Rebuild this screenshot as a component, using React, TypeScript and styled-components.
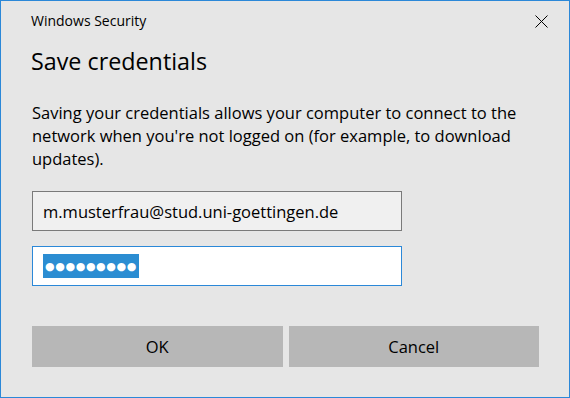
import React from 'react';
import styled, { createGlobalStyle } from 'styled-components';

const Global = createGlobalStyle`
  html, body {
    margin: 0;
    padding: 0;
    background: #e6e6e6;
  }
  * { box-sizing: border-box; }
`;

const Dialog = styled.div`
  width: 570px;
  height: 398px;
  border: 1px solid #2b88d8;
  background: #e6e6e6;
  font-family: 'Open Sans', 'Noto Sans', sans-serif;
  color: #000;
  display: flex;
  flex-direction: column;
  padding: 0 30px 0 30px;
`;

const TitleBar = styled.div`
  height: 40px;
  display: flex;
  align-items: center;
  justify-content: space-between;
  font-size: 14px;
  padding-bottom: 2px;
`;

const CloseButton = styled.div`
  width: 13px;
  height: 13px;
  margin-right: -9px;
  margin-top: 3px;
  display: flex;
  align-items: center;
  justify-content: center;
`;

const Heading = styled.h1`
  margin: 0;
  padding-top: 5px;
  font-size: 23.3px;
  font-weight: 400;
  line-height: 30px;
  height: 55px;
`;

const Message = styled.p`
  margin: 0 0 0 1px;
  padding-top: 5px;
  font-size: 16.5px;
  line-height: 23px;
  height: 95px;
`;

const Field = styled.div<{ $active?: boolean }>`
  width: 370px;
  height: 40px;
  margin-left: 1px;
  display: flex;
  align-items: center;
  padding: 0 10px;
  font-size: 16.5px;
  background: ${p => (p.$active ? '#ffffff' : '#f0f0f0')};
  border: 1px solid ${p => (p.$active ? '#2b88d8' : '#7a7a7a')};
  margin-bottom: 15px;
`;

const Selection = styled.span`
  background: #2b8dd2;
  color: #fff;
  height: 24px;
  width: 96px;
  display: flex;
  align-items: center;
  justify-content: center;
  font-family: 'DejaVu Sans', sans-serif;
  font-size: 11px;
  letter-spacing: 0.6px;
`;

const Buttons = styled.div`
  display: flex;
  gap: 6px;
  margin-top: 25px;
  margin-left: 1px;
`;

const Button = styled.div`
  width: 251px;
  height: 41px;
  background: #b7b7b7;
  display: flex;
  align-items: center;
  justify-content: center;
  font-size: 16.5px;
`;

export default function App() {
  return (
    <>
      <Global />
      <Dialog>
        <TitleBar>
          <span>Windows Security</span>
          <CloseButton>
            <svg width="13" height="13" viewBox="0 0 13 13">
              <path d="M0.5 0.5L12.5 12.5M12.5 0.5L0.5 12.5" stroke="#000" strokeWidth="1" />
            </svg>
          </CloseButton>
        </TitleBar>
        <Heading>Save credentials</Heading>
        <Message>
          Saving your credentials allows your computer to connect to the
          <br />
          network when you're not logged on (for example, to download
          <br />
          updates).
        </Message>
        <Field>m.musterfrau@stud.uni-goettingen.de</Field>
        <Field $active>
          <Selection>●●●●●●●●●</Selection>
        </Field>
        <Buttons>
          <Button>OK</Button>
          <Button>Cancel</Button>
        </Buttons>
      </Dialog>
    </>
  );
}
